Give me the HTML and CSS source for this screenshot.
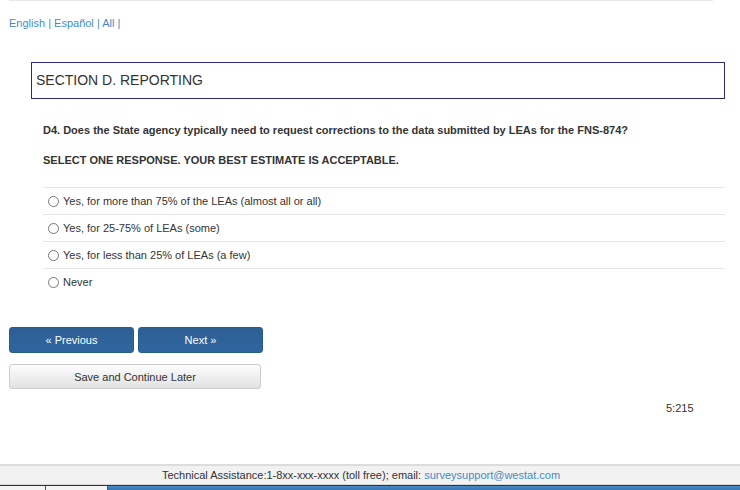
FILE: index.html
```html
<!DOCTYPE html>
<html lang="en">
<head>
    <meta charset="UTF-8">
    <title>Survey - Section D</title>
    <link rel="stylesheet" href="styles.css">
</head>
<body>
    <div class="page">
        <div class="top-rule"></div>
        <div class="lang">
            <a href="#">English</a> | <a href="#">Español</a> | <a href="#">All</a> |
        </div>

        <div class="section-title">SECTION D. REPORTING</div>

        <div class="question">
            <p class="q-text">D4. Does the State agency typically need to request corrections to the data submitted by LEAs for the FNS-874?</p>
            <p class="q-instr">SELECT ONE RESPONSE. YOUR BEST ESTIMATE IS ACCEPTABLE.</p>
            <div class="options">
                <label class="option"><input type="radio" name="d4"> Yes, for more than 75% of the LEAs (almost all or all)</label>
                <label class="option"><input type="radio" name="d4"> Yes, for 25-75% of LEAs (some)</label>
                <label class="option"><input type="radio" name="d4"> Yes, for less than 25% of LEAs (a few)</label>
                <label class="option"><input type="radio" name="d4"> Never</label>
            </div>
        </div>

        <div class="nav">
            <div class="nav-row">
                <button class="btn btn-primary">« Previous</button>
                <button class="btn btn-primary">Next »</button>
            </div>
            <button class="btn btn-default">Save and Continue Later</button>
        </div>

        <div class="page-id">5:215</div>
    </div>

    <div class="footer">
        Technical Assistance:1-8xx-xxx-xxxx (toll free); email: <a href="#">surveysupport@westat.com</a>
    </div>
    <div class="taskbar">
        <span class="tb-tab first"></span><span class="tb-tab"></span>
    </div>
</body>
</html>
```

FILE: styles.css
```css
html, body {
    margin: 0;
    padding: 0;
    font-family: "Liberation Sans", Arial, sans-serif;
    font-size: 11px;
    color: #333;
    background: #fff;
}
a {
    color: #428bca;
    text-decoration: none;
}
.page {
    height: 464px;
    padding: 0 15px 0 9px;
    box-sizing: border-box;
}
.top-rule {
    width: 704px;
    border-top: 1px solid #e8e8e8;
}
.lang {
    margin-top: 16px;
    color: #428bca;
    line-height: 13px;
}
.section-title {
    margin: 32px 0 0 22px;
    width: 694px;
    height: 37px;
    border: 1px solid #2b2b75;
    box-sizing: border-box;
    padding: 0 0 0 4px;
    font-size: 14px;
    line-height: 35px;
}
.question {
    margin-left: 34px;
}
.q-text, .q-instr {
    margin: 0;
    font-weight: bold;
    line-height: 13px;
}
.q-text {
    padding-top: 25px;
}
.q-instr {
    padding-top: 17px;
}
.options {
    margin-top: 20px;
    width: 682px;
}
.option {
    display: flex;
    align-items: center;
    height: 26px;
    border-top: 1px solid #e5e5e5;
    padding-left: 5px;
}
.option input {
    margin: 0 4px 0 0;
    width: 11px;
    height: 11px;
}
.nav {
    margin-top: 32px;
}
.nav-row {
    display: flex;
    gap: 4px;
}
.btn {
    font-family: "Liberation Sans", Arial, sans-serif;
    font-size: 11px;
    border-radius: 3px;
    cursor: pointer;
}
.btn-primary {
    width: 125px;
    height: 26px;
    color: #fff;
    border: 1px solid #2a5a8c;
    background: linear-gradient(#2c5f94, #30669f);
}
.btn-default {
    margin-top: 11px;
    width: 252px;
    height: 25px;
    color: #333;
    border: 1px solid #ccc;
    background: linear-gradient(#fdfdfd, #e2e2e2);
}
.page-id {
    margin: 13px 0 0 657px;
}
.footer {
    height: 18px;
    padding-right: 18px;
    border-top: 2px solid #dcdcdc;
    border-bottom: 1px solid #d8d8d8;
    background: #f2f2f2;
    text-align: center;
    line-height: 18px;
}
.taskbar {
    display: flex;
    height: 5px;
    border-top: 1px solid #333;
    background: linear-gradient(#4a8ac4, #2f6fb0);
}
.tb-tab {
    width: 61px;
    border-right: 1px solid #555;
    background: #f4f4f4;
}
.tb-tab.first {
    width: 45px;
}
```
